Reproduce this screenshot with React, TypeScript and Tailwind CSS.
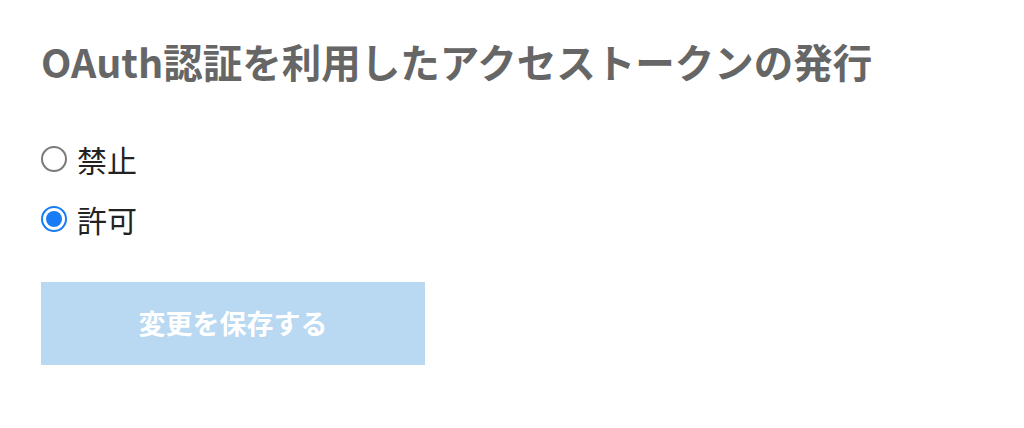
import { useState } from 'react';

const FONT = 'font-["Noto_Sans_CJK_JP","Noto_Sans",sans-serif]';

function Radio({ checked }: { checked: boolean }) {
  return checked ? (
    <span className="flex h-[26px] w-[26px] shrink-0 items-center justify-center rounded-full border-[2px] border-[#1a7cf5] bg-white">
      <span className="h-[16px] w-[16px] rounded-full bg-[#1a7cf5]" />
    </span>
  ) : (
    <span className="h-[26px] w-[26px] shrink-0 rounded-full border-[2px] border-[#7a7a7a] bg-white" />
  );
}

export default function App() {
  const [value, setValue] = useState<'deny' | 'allow'>('allow');

  const options: { key: 'deny' | 'allow'; label: string }[] = [
    { key: 'deny', label: '禁止' },
    { key: 'allow', label: '許可' },
  ];

  return (
    <div className={`${FONT} min-h-[428px] w-[1024px] bg-white pl-[41px] pt-[31px]`}>
      <h2 className="h-[60px] text-[39.5px] font-bold leading-[60px] text-[#666666]">
        OAuth認証を利用したアクセストークンの発行
      </h2>

      {/* Radio options */}
      <div className="mt-[46px] flex flex-col gap-[16px]">
        {options.map((opt) => (
          <label
            key={opt.key}
            onClick={() => setValue(opt.key)}
            className="flex h-[44px] cursor-pointer items-center gap-[10px] text-[30px] leading-[44px] text-[#222222]"
          >
            <Radio checked={value === opt.key} />
            <span>{opt.label}</span>
          </label>
        ))}
      </div>

      <button
        disabled
        className="mt-[41px] flex h-[83px] w-[384px] items-center justify-center bg-[#b9d8f2] text-[27px] font-bold text-white"
      >
        変更を保存する
      </button>
    </div>
  );
}
